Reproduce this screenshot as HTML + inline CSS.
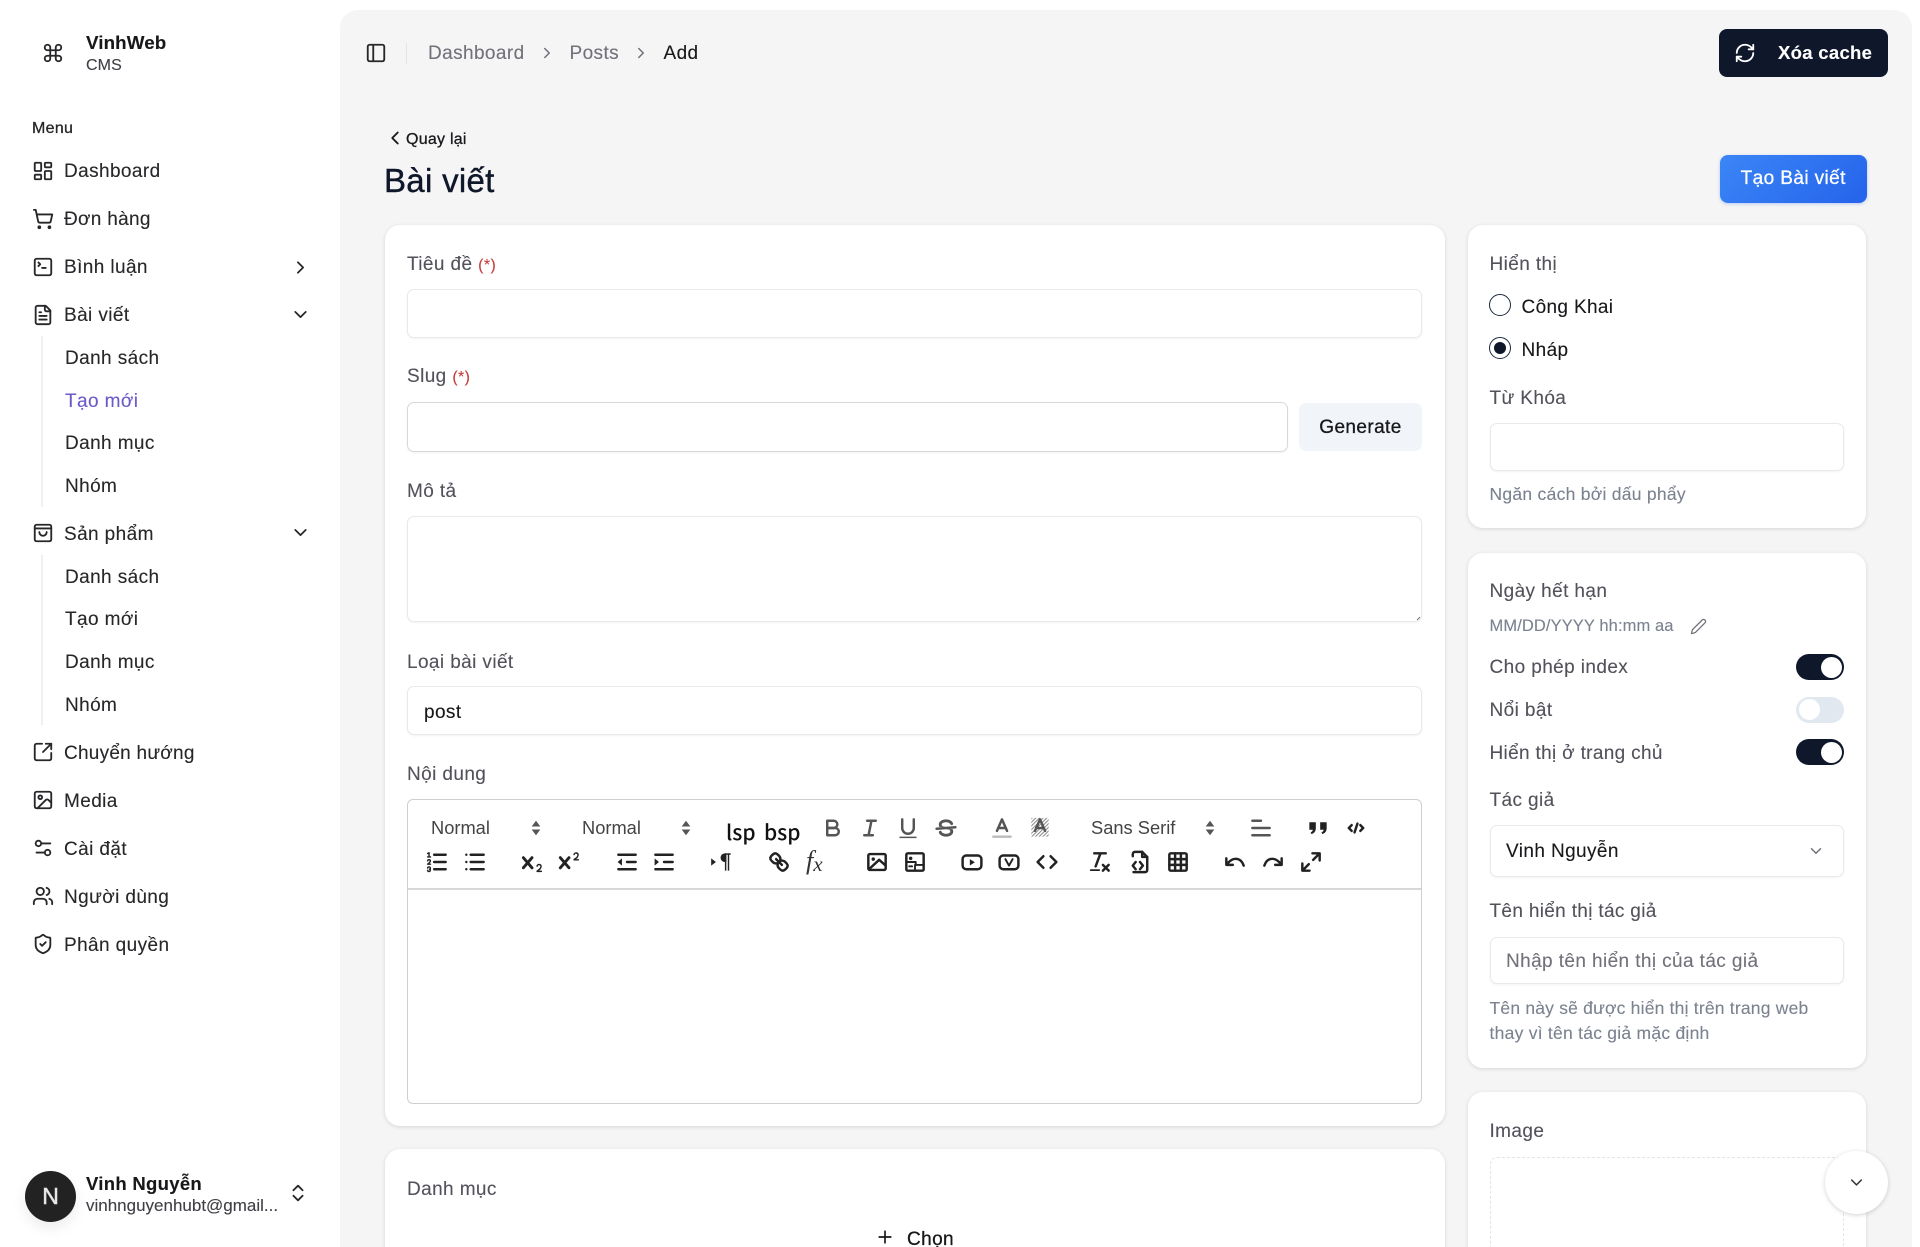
<!DOCTYPE html>
<html lang="vi"><head><meta charset="utf-8"><title>Bài viết</title>
<style>
*{box-sizing:border-box}
html,body{margin:0;padding:0;width:1920px;height:1247px;overflow:hidden;background:#fff}
body{position:relative;font-family:"Liberation Sans",Arial,sans-serif;font-size:19px;letter-spacing:.4px;color:#27272a;-webkit-text-stroke:.12px currentColor}
.t{position:absolute;line-height:26px;height:26px;white-space:nowrap}
.s{color:#52525b}
.g{color:#71717a}
.m{font-size:17.5px;color:#7b8290;letter-spacing:.3px}
.b{font-weight:700;letter-spacing:.1px}
.d{color:#18181b}
.r{color:#c53d3d;font-size:16px}
.box{position:absolute;background:#fff;border:1px solid #e7e9ed;border-radius:7px;box-shadow:0 1px 2px rgba(0,0,0,.05)}
.card{position:absolute;background:#fff;border-radius:15px;box-shadow:0 1px 4px rgba(0,0,0,.13)}
.ic{position:absolute;width:22px;height:22px;fill:none;stroke:#27272a;stroke-width:2;stroke-linecap:round;stroke-linejoin:round}
.q{position:absolute;width:26px;height:26px;fill:none;stroke:#222;stroke-width:1.7;stroke-linecap:round;stroke-linejoin:round}
.q .f{fill:#222;stroke:none}
.q.l{stroke:#555}.q.l .f{fill:#555}
.ql{position:absolute;line-height:26px;height:26px;font-size:18.3px;letter-spacing:0;color:#444;white-space:nowrap;-webkit-text-stroke:0}
.tg{position:absolute;left:1796px;width:48px;height:26px;border-radius:13px;background:#0f172a}
.tg i{position:absolute;right:2.500px;top:2.500px;width:21px;height:21px;border-radius:50%;background:#fff}
.tg.off{background:#e2e8f0}
.tg.off i{right:auto;left:2.500px}
</style></head><body>

<!-- logo -->
<svg class="ic" style="left:42px;top:42px" viewBox="0 0 24 24"><path d="M15 6v12a3 3 0 1 0 3-3H6a3 3 0 1 0 3 3V6a3 3 0 1 0-3 3h12a3 3 0 1 0-3-3"/></svg>
<div class="t b" style="left:86px;top:30px;font-size:18.8px;color:#18181b">VinhWeb</div>
<div class="t" style="left:86px;top:53px;font-size:16px;letter-spacing:.1px;color:#3f3f46">CMS</div>
<div class="t" style="left:32px;top:116px;font-size:16px;letter-spacing:.3px;color:#27272a;-webkit-text-stroke:.3px #27272a">Menu</div>

<!-- nav -->
<svg class="ic" style="left:31.500px;top:160px" viewBox="0 0 24 24"><rect x="3" y="3" width="7" height="9" rx="1"/><rect x="14" y="3" width="7" height="5" rx="1"/><rect x="14" y="12" width="7" height="9" rx="1"/><rect x="3" y="16" width="7" height="5" rx="1"/></svg>
<div class="t" style="left:64px;top:159px">Dashboard</div>
<svg class="ic" style="left:31.500px;top:208px" viewBox="0 0 24 24"><circle cx="8" cy="21" r="1"/><circle cx="19" cy="21" r="1"/><path d="M2.05 2.05h2l2.66 12.42a2 2 0 0 0 2 1.58h9.78a2 2 0 0 0 1.95-1.57l1.65-7.43H5.12"/></svg>
<div class="t" style="left:64px;top:207px;letter-spacing:.3px">Đơn hàng</div>
<svg class="ic" style="left:31.500px;top:256px" viewBox="0 0 24 24"><path d="m7 11 2-2-2-2"/><path d="M11 13h4"/><rect x="3" y="3" width="18" height="18" rx="2"/></svg>
<div class="t" style="left:64px;top:255px">Bình luận</div>
<svg class="ic" style="left:290px;top:256.500px;width:21px;height:21px" viewBox="0 0 24 24"><path d="m9 18 6-6-6-6"/></svg>
<svg class="ic" style="left:31.500px;top:304px" viewBox="0 0 24 24"><path d="M15 2H6a2 2 0 0 0-2 2v16a2 2 0 0 0 2 2h12a2 2 0 0 0 2-2V7Z"/><path d="M14 2v4a2 2 0 0 0 2 2h4"/><path d="M10 9H8"/><path d="M16 13H8"/><path d="M16 17H8"/></svg>
<div class="t" style="left:64px;top:303px">Bài viết</div>
<svg class="ic" style="left:290px;top:304px;width:21px;height:21px" viewBox="0 0 24 24"><path d="m6 9 6 6 6-6"/></svg>
<div style="position:absolute;left:41px;top:336px;width:2px;height:171px;background:#f0f0f0"></div>
<div class="t" style="left:65px;top:346px">Danh sách</div>
<div class="t" style="left:65px;top:388.500px;color:#6a5bc8">Tạo mới</div>
<div class="t" style="left:65px;top:431px">Danh mục</div>
<div class="t" style="left:65px;top:474px">Nhóm</div>
<svg class="ic" style="left:31.500px;top:522px" viewBox="0 0 24 24"><rect x="3" y="3" width="18" height="18" rx="2"/><path d="M3 7h18"/><path d="M16 11a4 4 0 0 1-8 0"/></svg>
<div class="t" style="left:64px;top:521.500px">Sản phẩm</div>
<svg class="ic" style="left:290px;top:522px;width:21px;height:21px" viewBox="0 0 24 24"><path d="m6 9 6 6 6-6"/></svg>
<div style="position:absolute;left:41px;top:555px;width:2px;height:170px;background:#f0f0f0"></div>
<div class="t" style="left:65px;top:564.500px">Danh sách</div>
<div class="t" style="left:65px;top:607px">Tạo mới</div>
<div class="t" style="left:65px;top:650px">Danh mục</div>
<div class="t" style="left:65px;top:693px">Nhóm</div>
<svg class="ic" style="left:31.500px;top:741px" viewBox="0 0 24 24"><path d="M21 13v6a2 2 0 0 1-2 2H5a2 2 0 0 1-2-2V5a2 2 0 0 1 2-2h6"/><path d="m21 3-9 9"/><path d="M15 3h6v6"/></svg>
<div class="t" style="left:64px;top:740.500px;letter-spacing:.25px">Chuyển hướng</div>
<svg class="ic" style="left:31.500px;top:789px" viewBox="0 0 24 24"><rect x="3" y="3" width="18" height="18" rx="2"/><circle cx="9" cy="9" r="2"/><path d="m21 15-3.086-3.086a2 2 0 0 0-2.828 0L6 21"/></svg>
<div class="t" style="left:64px;top:788.500px">Media</div>
<svg class="ic" style="left:31.500px;top:837px" viewBox="0 0 24 24"><path d="M20 7h-9"/><path d="M14 17H5"/><circle cx="17" cy="17" r="3"/><circle cx="7" cy="7" r="3"/></svg>
<div class="t" style="left:64px;top:836.500px">Cài đặt</div>
<svg class="ic" style="left:31.500px;top:885px" viewBox="0 0 24 24"><path d="M16 21v-2a4 4 0 0 0-4-4H6a4 4 0 0 0-4 4v2"/><circle cx="9" cy="7" r="4"/><path d="M22 21v-2a4 4 0 0 0-3-3.87"/><path d="M16 3.13a4 4 0 0 1 0 7.75"/></svg>
<div class="t" style="left:64px;top:884.500px">Người dùng</div>
<svg class="ic" style="left:31.500px;top:933px" viewBox="0 0 24 24"><path d="M20 13c0 5-3.5 7.5-7.66 8.95a1 1 0 0 1-.67-.01C7.5 20.5 4 18 4 13V6a1 1 0 0 1 1-1c2 0 4.5-1.2 6.24-2.72a1.17 1.17 0 0 1 1.52 0C14.51 3.81 17 5 19 5a1 1 0 0 1 1 1z"/><path d="m9 12 2 2 4-4"/></svg>
<div class="t" style="left:64px;top:932.500px">Phân quyền</div>

<!-- user -->
<div style="position:absolute;left:25px;top:1171px;width:51px;height:51px;border-radius:50%;background:#222;box-shadow:0 6px 14px rgba(0,0,0,.08)"></div>
<div class="t" style="left:25px;top:1183px;width:51px;text-align:center;color:#e8e8e8;font-size:23px;letter-spacing:0;-webkit-text-stroke:.5px #e8e8e8">N</div>
<div class="t b" style="left:86px;top:1170.500px;font-size:18.500px;color:#18181b;letter-spacing:.3px">Vinh Nguyễn</div>
<div class="t" style="left:86px;top:1193px;font-size:17px;letter-spacing:0;color:#3f3f46">vinhnguyenhubt@gmail...</div>
<svg class="ic" style="left:287px;top:1182px" viewBox="0 0 24 24"><path d="m7 15 5 5 5-5"/><path d="m7 9 5-5 5 5"/></svg>

<!-- main panel -->
<div style="position:absolute;left:340px;top:10px;width:1572px;height:1237px;background:#f5f5f5;border-radius:18px 18px 0 0"></div>
<svg class="ic" style="left:365px;top:42px" viewBox="0 0 24 24"><rect x="3" y="3" width="18" height="18" rx="2"/><path d="M9 3v18"/></svg>
<div style="position:absolute;left:406px;top:43px;width:1px;height:21px;background:#e4e4e7"></div>
<div class="t g" style="left:428px;top:41px">Dashboard</div>
<svg class="ic" style="left:538px;top:44px;width:18px;height:18px;stroke:#71717a" viewBox="0 0 24 24"><path d="m9 18 6-6-6-6"/></svg>
<div class="t g" style="left:569.500px;top:41px">Posts</div>
<svg class="ic" style="left:632px;top:44px;width:18px;height:18px;stroke:#71717a" viewBox="0 0 24 24"><path d="m9 18 6-6-6-6"/></svg>
<div class="t d" style="left:663.500px;top:41px">Add</div>

<div style="position:absolute;left:1719px;top:29px;width:169px;height:48px;background:#0f172a;border-radius:8px"></div>
<svg class="ic" style="left:1734px;top:42px;stroke:#fff" viewBox="0 0 24 24"><path d="M3 12a9 9 0 0 1 9-9 9.75 9.75 0 0 1 6.74 2.74L21 8"/><path d="M21 3v5h-5"/><path d="M21 12a9 9 0 0 1-9 9 9.75 9.75 0 0 1-6.74-2.74L3 16"/><path d="M8 16H3v5"/></svg>
<div class="t" style="left:1778px;top:40px;color:#fff;font-weight:700;font-size:18.500px;letter-spacing:.3px">Xóa cache</div>

<svg class="ic" style="left:384px;top:127px;stroke:#18181b" viewBox="0 0 24 24"><path d="m15 18-6-6 6-6"/></svg>
<div class="t" style="left:406px;top:127px;font-size:16px;letter-spacing:.25px;color:#18181b;-webkit-text-stroke:.3px #18181b">Quay lại</div>
<div class="t" style="left:384px;top:161px;height:40px;line-height:40px;font-size:33px;letter-spacing:.3px;color:#0f172a;-webkit-text-stroke:.4px #0f172a">Bài viết</div>
<div style="position:absolute;left:1720px;top:154.500px;width:146.500px;height:48px;border-radius:8px;background:linear-gradient(135deg,#3b86f6,#2563eb);box-shadow:0 1px 3px rgba(37,99,235,.3)"></div>
<div class="t" style="left:1720px;top:166px;width:146.500px;text-align:center;color:#fff;-webkit-text-stroke:.3px #fff">Tạo Bài viết</div>

<!-- left card -->
<div class="card" style="left:385px;top:225px;width:1060px;height:901px"></div>
<div class="t s" style="left:407px;top:252px">Tiêu đề <span class="r">(*)</span></div>
<div class="box" style="left:407px;top:289px;width:1015px;height:49px"></div>
<div class="t s" style="left:407px;top:364px">Slug <span class="r">(*)</span></div>
<div class="box" style="left:407px;top:402px;width:881px;height:49.500px;border:1.500px solid #d8d8dc"></div>
<div style="position:absolute;left:1299px;top:403px;width:123px;height:48px;background:#f1f5f9;border-radius:7px"></div>
<div class="t d" style="left:1299px;top:414.500px;width:123px;text-align:center;-webkit-text-stroke:.3px #18181b">Generate</div>
<div class="t s" style="left:407px;top:478.500px">Mô tả</div>
<div class="box" style="left:407px;top:516px;width:1015px;height:106px"></div>
<svg style="position:absolute;left:1416px;top:616px;width:5px;height:5px"><path d="M1 4 4 1" stroke="#777" stroke-width="1"/></svg>
<div class="t s" style="left:407px;top:649.500px">Loại bài viết</div>
<div class="box" style="left:407px;top:686px;width:1015px;height:48.500px"></div>
<div class="t d" style="left:424px;top:700px">post</div>
<div class="t s" style="left:407px;top:761.500px">Nội dung</div>

<!-- editor -->
<div style="position:absolute;left:407px;top:799px;width:1015px;height:305px;background:#fff;border:1.500px solid #cfcfd2;border-radius:6px"></div>
<div style="position:absolute;left:408px;top:888px;width:1013px;height:1.500px;background:#d8d8da"></div>

<div class="ql" style="left:431px;top:815px">Normal</div>
<svg class="q l" style="left:523px;top:815px" viewBox="0 0 18 18"><polygon class="f" points="6 8 9 4 12 8"/><polygon class="f" points="6 10 9 14 12 10"/></svg>
<div class="ql" style="left:582px;top:815px">Normal</div>
<svg class="q l" style="left:673px;top:815px" viewBox="0 0 18 18"><polygon class="f" points="6 8 9 4 12 8"/><polygon class="f" points="6 10 9 14 12 10"/></svg>
<div class="ql" style="left:726px;top:819px;font-family:'Noto Sans CJK KR','DejaVu Sans',sans-serif;font-size:21px;color:#111;font-weight:500">lsp</div>
<div class="ql" style="left:764px;top:819px;font-family:'Noto Sans CJK KR','DejaVu Sans',sans-serif;font-size:21px;color:#111;font-weight:500">bsp</div>
<svg class="q l" style="left:820px;top:815px" viewBox="0 0 18 18"><path d="M5,4H9.500A2.500,2.500,0,0,1,12,6.500v0A2.500,2.500,0,0,1,9.500,9H5V4Z"/><path d="M5,9h5.500A2.500,2.500,0,0,1,13,11.500v0A2.500,2.500,0,0,1,10.500,14H5V9Z"/></svg>
<svg class="q l" style="left:857px;top:815px" viewBox="0 0 18 18"><path d="M7 4h6M5 14h6M8 14l2-10"/></svg>
<svg class="q l" style="left:895px;top:815px" viewBox="0 0 18 18"><path d="M5,3V9a4,4,0,0,0,4,4h0a4,4,0,0,0,4-4V3"/><rect class="f" x="3" y="15" width="12" height="1" rx=".5"/></svg>
<svg class="q l" style="left:933px;top:815px" viewBox="0 0 18 18"><path d="M15.500 8.500 2.500 9.500"/><path class="f" d="M9.007,8C6.542,7.791,6,7.519,6,6.500,6,5.792,7.283,5,9,5c1.571,0,2.765.679,2.969,1.309a1,1,0,0,0,1.900-.617C13.356,4.106,11.354,3,9,3,6.200,3,4,4.538,4,6.500a3.200,3.200,0,0,0,.5,1.843Z"/><path class="f" d="M8.984,10C11.457,10.208,12,10.479,12,11.500c0,.708-1.283,1.500-3,1.500-1.571,0-2.765-.679-2.969-1.309a1,1,0,1,0-1.900.617C4.644,13.894,6.646,15,9,15c2.800,0,5-1.538,5-3.500a3.200,3.200,0,0,0-.5-1.843Z"/></svg>
<svg class="q l" style="left:989px;top:815px" viewBox="0 0 18 18"><path d="M3 15h12" stroke="#bbb"/><path d="M5.500 11 9 3l3.500 8"/><path d="M11.600 9H6.400"/></svg>
<svg class="q l" style="left:1027px;top:815px" viewBox="0 0 18 18"><defs><pattern id="h" width="1.800" height="1.800" patternUnits="userSpaceOnUse" patternTransform="rotate(45)"><rect width=".7" height="1.800" fill="#888" stroke="none"/></pattern></defs><rect x="3" y="2" width="12" height="13" fill="url(#h)" stroke="none"/><path d="M5.500 11 9 3l3.500 8"/><path d="M11.600 9H6.400"/></svg>
<div class="ql" style="left:1091px;top:815px">Sans Serif</div>
<svg class="q l" style="left:1197px;top:815px" viewBox="0 0 18 18"><polygon class="f" points="6 8 9 4 12 8"/><polygon class="f" points="6 10 9 14 12 10"/></svg>
<svg class="q l" style="left:1248px;top:815px" viewBox="0 0 18 18"><path d="M3 9h12M3 14h12M3 4h6"/></svg>
<svg class="q" style="left:1305px;top:815px" viewBox="0 0 18 18"><path class="f" d="M3 5h4.500v4c0 2.200-1 3.600-3 4.200l-.6-1.200c1-.4 1.400-1 1.500-1.800H3z"/><path class="f" d="M10.500 5H15v4c0 2.200-1 3.600-3 4.200l-.6-1.200c1-.4 1.400-1 1.500-1.800h-2.400z"/></svg>
<svg class="q" style="left:1343px;top:815px" viewBox="0 0 18 18"><path d="M6 7 4 9l2 2M12 7l2 2-2 2M10 6 8 12"/></svg>

<svg class="q" style="left:424px;top:849px" viewBox="0 0 18 18"><path d="M7 4h8M7 9h8M7 14h8"/><path stroke-width="1" d="M2.500 5.500h2M3.500 5.500V2.600l-1 .5"/><path stroke-width="1" d="M4.500 10.500h-2c0-.2 1.900-1.100 1.900-2.200a.96.96 0 0 0-1.900-.1"/><path stroke-width="1" d="M2.500 14.800a.96.96 0 0 0 1.900-.1.7.7 0 0 0-.6-.7.7.7 0 0 0 .6-.7.96.96 0 0 0-1.900-.1"/></svg>
<svg class="q" style="left:462px;top:849px" viewBox="0 0 18 18"><path d="M6 4h9M6 9h9M6 14h9M3 4h0M3 9h0M3 14h0"/></svg>
<svg class="q" style="left:519px;top:849px" viewBox="0 0 18 18"><path class="f" d="M15.500,15H13.861a3.858,3.858,0,0,0,1.914-2.975,1.800,1.800,0,0,0-1.600-1.751A1.921,1.921,0,0,0,12.021,11.700a.5.5,0,1,0,.957.291h0a.914.914,0,0,1,1.053-.725.81.81,0,0,1,.744.762c0,1.076-1.170,1.870-1.940,2.431A1.456,1.456,0,0,0,12,15.500a.5.5,0,0,0,.5.5h3A.5.5,0,0,0,15.500,15Z"/><path class="f" d="M9.650,5.241a1,1,0,0,0-1.409.108L6,7.964,3.759,5.349A1,1,0,0,0,2.241,6.649L4.684,9.500,2.241,12.350A1,1,0,0,0,3.759,13.650L6,11.036,8.241,13.650a1,1,0,1,0,1.518-1.300L7.316,9.500,9.759,6.651A1,1,0,0,0,9.650,5.241Z"/></svg>
<svg class="q" style="left:556px;top:849px" viewBox="0 0 18 18"><path class="f" d="M15.500,7H13.861a4.015,4.015,0,0,0,1.914-2.975,1.800,1.800,0,0,0-1.600-1.751A1.922,1.922,0,0,0,12.021,3.700a.5.5,0,1,0,.957.291.917.917,0,0,1,1.053-.725.81.81,0,0,1,.744.762c0,1.077-1.164,1.925-1.934,2.486A1.423,1.423,0,0,0,12,7.500a.5.5,0,0,0,.5.5h3A.5.5,0,0,0,15.500,7Z"/><path class="f" d="M9.651,5.241a1,1,0,0,0-1.410.108L6,7.964,3.759,5.349a1,1,0,1,0-1.519,1.300L4.683,9.500,2.241,12.350a1,1,0,1,0,1.519,1.300L6,11.036,8.241,13.650a1,1,0,0,0,1.519-1.300L7.317,9.500,9.759,6.651A1,1,0,0,0,9.651,5.241Z"/></svg>
<svg class="q" style="left:614px;top:849px" viewBox="0 0 18 18"><path d="M3 14h12M3 4h12M9 9h6"/><polygon class="f" points="5.500 6.500 5.500 11.500 2.500 9"/></svg>
<svg class="q" style="left:651px;top:849px" viewBox="0 0 18 18"><path d="M3 14h12M3 4h12M9 9h6"/><polygon class="f" points="2.500 6.500 2.500 11.500 5.500 9"/></svg>
<svg class="q" style="left:709px;top:849px" viewBox="0 0 18 18"><polygon class="f" points="1.500 11.500 4.800 9 1.500 6.500"/><path class="f" d="M11 3a3 3 0 0 0 0 6h1V3z"/><rect class="f" x="11" y="4" width="1" height="11"/><rect class="f" x="13" y="3" width="1" height="12"/><rect class="f" x="11" y="3" width="4" height="1"/></svg>
<svg class="q" style="left:766px;top:849px" viewBox="0 0 18 18"><path d="M7 7l4 4"/><path d="M8.900,4.577a3.476,3.476,0,0,1,.36,4.679A3.476,3.476,0,0,1,4.577,8.900C3.185,7.500,2.035,6.400,4.217,4.217S7.500,3.185,8.900,4.577Z"/><path d="M13.423,9.100a3.476,3.476,0,0,0-4.679-.36,3.476,3.476,0,0,0,.36,4.679c1.392,1.392,2.500,2.542,4.679.36S14.815,10.500,13.423,9.100Z"/></svg>
<div class="ql" style="left:806px;top:848px;font-family:'Liberation Serif',serif;font-style:italic;font-size:26px;color:#333">f<span style="font-size:21px;position:relative;top:2px">x</span></div>
<svg class="q" style="left:863.500px;top:849px" viewBox="0 0 18 18"><rect x="3" y="3.500" width="12" height="11" rx="1"/><circle class="f" cx="6.400" cy="7" r="1.200"/><path d="M4 13.500 10.500 7.500 14.500 11"/></svg>
<svg class="q" style="left:901.500px;top:849px" viewBox="0 0 18 18"><rect x="3" y="3" width="12" height="12" rx="1"/><circle class="f" cx="6" cy="6.500" r="1.200"/><path stroke-width="1.300" d="M3.500 9h6v2H15M9 11v3M5 12h2"/></svg>
<svg class="q" style="left:959px;top:849px" viewBox="0 0 18 18"><rect x="2.500" y="4.500" width="13" height="9.500" rx="2.500"/><polygon class="f" points="7.500 7 11 9.200 7.500 11.400"/></svg>
<svg class="q" style="left:996px;top:849px" viewBox="0 0 18 18"><rect x="2.500" y="4.500" width="13" height="9.500" rx="2.500"/><path stroke-width="1.300" d="M6.500 7 9 11.500 11.500 7"/></svg>
<svg class="q" style="left:1034px;top:849px" viewBox="0 0 18 18"><path d="M6.500 5 2.500 9l4 4M11.500 5l4 4-4 4"/></svg>
<svg class="q" style="left:1087px;top:849px" viewBox="0 0 18 18"><path d="M5 3h8M6 12 9.350 3M11 11l4 4M15 11l-4 4"/><rect class="f" x="2" y="14" width="7" height="1.200" rx=".5"/></svg>
<svg class="q" style="left:1127px;top:849px" viewBox="0 0 18 18"><path d="M4 5V3.500A1.500 1.500 0 0 1 5.500 2H10.500L14 5.500V14.500A1.500 1.500 0 0 1 12.500 16H4.500"/><path d="M10.500 2V5.500H14"/><path d="M6 9 4 11.500 6 14M9 9l2 2.500L9 14"/></svg>
<svg class="q" style="left:1165px;top:849px" viewBox="0 0 18 18"><rect x="3" y="3" width="12" height="12" rx="1"/><path d="M7 3v12M11 3v12M3 7h12M3 11h12"/></svg>
<svg class="q" style="left:1222px;top:849px" viewBox="0 0 18 18"><path d="M3 6.500v4.500h4.500"/><path d="M3.500 10.500C5.500 7.800 7.500 6.800 9.500 6.800c2.800 0 4.500 1.800 5.500 4.700"/></svg>
<svg class="q" style="left:1260px;top:849px" viewBox="0 0 18 18"><path d="M15 6.500v4.500h-4.500"/><path d="M14.500 10.500C12.500 7.800 10.500 6.800 8.500 6.800c-2.800 0-4.500 1.800-5.500 4.700"/></svg>
<svg class="q" style="left:1298px;top:849px" viewBox="0 0 18 18"><path d="M3.500 14.500 7.500 10.500M10.500 7.500 14.500 3.500M10 3h5v5M3 10v5h5"/></svg>

<!-- lower left card -->
<div class="card" style="left:385px;top:1149px;width:1060px;height:130px"></div>
<div class="t s" style="left:407px;top:1176.500px">Danh mục</div>
<svg class="ic" style="left:875px;top:1227px;stroke:#18181b;width:20px;height:20px" viewBox="0 0 24 24"><path d="M5 12h14M12 5v14"/></svg>
<div class="t d" style="left:907px;top:1226.500px;-webkit-text-stroke:.3px #18181b">Chọn</div>

<!-- right card 1 -->
<div class="card" style="left:1467.500px;top:225px;width:398.500px;height:303px"></div>
<div class="t s" style="left:1489.500px;top:251.500px">Hiển thị</div>
<div style="position:absolute;left:1489px;top:294px;width:22px;height:22px;border:1.500px solid #1e293b;border-radius:50%;background:#fff"></div>
<div class="t d" style="left:1521.500px;top:295px;letter-spacing:.35px">Công Khai</div>
<div style="position:absolute;left:1489px;top:337px;width:22px;height:22px;border:1.500px solid #1e293b;border-radius:50%;background:#fff"></div>
<div style="position:absolute;left:1494px;top:342px;width:12px;height:12px;border-radius:50%;background:#0f172a"></div>
<div class="t d" style="left:1521.500px;top:337.500px">Nháp</div>
<div class="t s" style="left:1489.500px;top:385.500px">Từ Khóa</div>
<div class="box" style="left:1489.500px;top:423px;width:354.500px;height:48px"></div>
<div class="t m" style="left:1489.500px;top:480.500px;letter-spacing:.27px">Ngăn cách bởi dấu phẩy</div>

<!-- right card 2 -->
<div class="card" style="left:1467.500px;top:552.500px;width:398.500px;height:515.500px"></div>
<div class="t s" style="left:1489.500px;top:578.500px">Ngày hết hạn</div>
<div class="t m" style="left:1489.500px;top:613px;font-size:16.500px;letter-spacing:.1px">MM/DD/YYYY hh:mm aa</div>
<svg class="ic" style="left:1689.500px;top:617.500px;width:17px;height:17px;stroke:#71717a;stroke-width:1.800" viewBox="0 0 24 24"><path d="M21.174 6.812a1 1 0 0 0-3.986-3.987L3.842 16.174a2 2 0 0 0-.5.83l-1.321 4.352a.5.5 0 0 0 .623.622l4.353-1.32a2 2 0 0 0 .83-.497z"/></svg>
<div class="t s" style="left:1489.500px;top:654.500px">Cho phép index</div>
<div class="tg" style="top:654px"><i></i></div>
<div class="t s" style="left:1489.500px;top:697.500px">Nổi bật</div>
<div class="tg off" style="top:696.500px"><i></i></div>
<div class="t s" style="left:1489.500px;top:740.500px;letter-spacing:.33px">Hiển thị ở trang chủ</div>
<div class="tg" style="top:739px"><i></i></div>
<div class="t s" style="left:1489.500px;top:787.500px">Tác giả</div>
<div class="box" style="left:1489.500px;top:824.500px;width:354.500px;height:52.500px"></div>
<div class="t d" style="left:1506px;top:838.500px">Vinh Nguyễn</div>
<svg class="ic" style="left:1807px;top:842px;width:18px;height:18px;stroke:#71717a" viewBox="0 0 24 24"><path d="m6 9 6 6 6-6"/></svg>
<div class="t s" style="left:1489.500px;top:898.500px;letter-spacing:.33px">Tên hiển thị tác giả</div>
<div class="box" style="left:1489.500px;top:937px;width:354.500px;height:47px"></div>
<div class="t g" style="left:1506px;top:948.500px">Nhập tên hiển thị của tác giả</div>
<div class="t m" style="left:1489.500px;top:994.500px;letter-spacing:.2px">Tên này sẽ được hiển thị trên trang web</div>
<div class="t m" style="left:1489.500px;top:1019.500px;letter-spacing:.25px">thay vì tên tác giả mặc định</div>

<!-- right card 3 -->
<div class="card" style="left:1467.500px;top:1092px;width:398.500px;height:200px"></div>
<div class="t s" style="left:1489.500px;top:1118.500px">Image</div>
<div style="position:absolute;left:1489.500px;top:1157px;width:354.500px;height:125px;border:1.500px dashed #e2e4e8;border-radius:7px"></div>
<div style="position:absolute;left:1824.500px;top:1151px;width:63px;height:63px;border-radius:50%;background:#fff;box-shadow:0 1px 5px rgba(0,0,0,.18)"></div>
<svg class="ic" style="left:1846.500px;top:1172.500px;width:19px;height:19px;stroke:#333" viewBox="0 0 24 24"><path d="m6 9 6 6 6-6"/></svg>

</body></html>
